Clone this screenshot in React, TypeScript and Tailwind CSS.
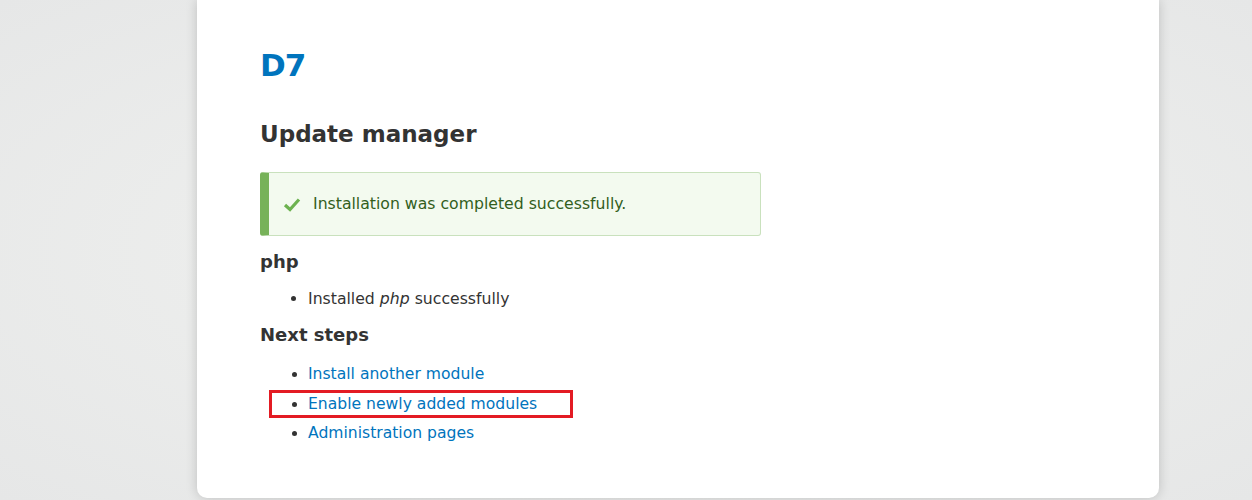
const font = "font-['DejaVu_Sans','Liberation_Sans',sans-serif]";

function CheckIcon() {
  return (
    <svg width="18" height="15" viewBox="0 0 18 15" aria-hidden="true">
      <path d="M2 8 L7 12.5 L16 2.5" fill="none" stroke="#6cb24f" strokeWidth="3.2" />
    </svg>
  );
}

const nextSteps = [
  { label: "Install another module" },
  { label: "Enable newly added modules", highlighted: true },
  { label: "Administration pages" },
];

export default function App() {
  return (
    <div
      className={`${font} h-[500px] overflow-hidden bg-[#e8e9e9] bg-[radial-gradient(ellipse_at_center,#f1f2f2_0%,#ecedec_45%,#e6e7e7_100%)]`}
    >
      <div className="ml-[197px] w-[962px] h-[498px] rounded-b-[10px] bg-white shadow-[0_0_12px_rgba(0,0,0,0.18)] px-[63px] pt-[45px]">
        <h1 className="text-[31px] font-bold leading-10 text-[#0074bd] tracking-[-1px]">D7</h1>

        <h2 className="mt-[33px] text-[23px] font-bold leading-8 text-[#333333]">Update manager</h2>

        <div className="mt-[22px] flex w-[501px] h-[64px] items-center rounded-[3px] border border-[#c9e1bd] border-l-[9px] border-l-[#77b259] bg-[#f3faef] pl-[14px] text-[15.7px] text-[#325e1c]">
          <CheckIcon />
          <span className="ml-[12px]">Installation was completed successfully.</span>
        </div>

        <h3 className="mt-[14px] text-[18px] font-bold leading-6 text-[#333333]">php</h3>
        <ul className="mt-[13px] list-disc pl-[48px] text-[15.7px] leading-6 text-[#333333]">
          <li>
            Installed <em>php</em> successfully
          </li>
        </ul>

        <h3 className="mt-[12px] text-[18px] font-bold leading-6 text-[#333333]">Next steps</h3>
        <ul className="mt-[15px] list-disc pl-[48px] text-[15.6px] leading-6 text-[#333333]">
          {nextSteps.map((s) => (
            <li key={s.label} className="relative mb-[5.5px]">
              <a href="#" className="text-[#0074bd]">
                {s.label}
              </a>
              {s.highlighted && (
                <span className="pointer-events-none absolute left-[-39px] top-[-2px] h-[28px] w-[304px] border-[3px] border-[#e31b23]" />
              )}
            </li>
          ))}
        </ul>
      </div>
    </div>
  );
}
